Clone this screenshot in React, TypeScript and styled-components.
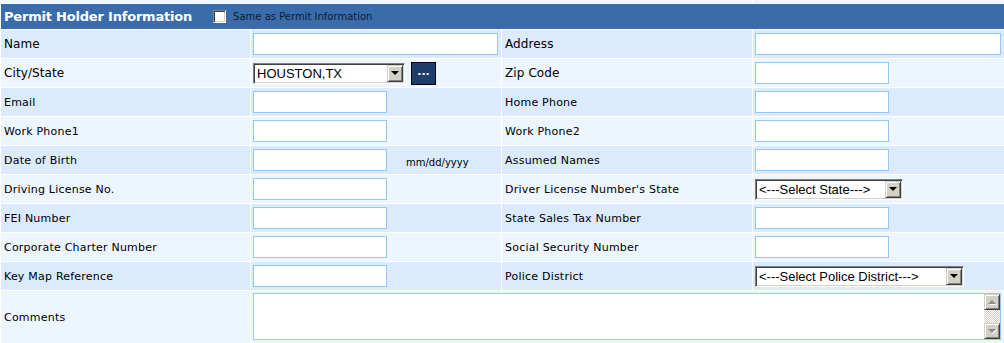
import React from 'react'
import styled, {createGlobalStyle} from 'styled-components'

const GlobalStyle = createGlobalStyle`
  body {
    margin: 0;
    background: #ffffff;
    font-family: "DejaVu Sans", Verdana, sans-serif;
  }
`

const Form = styled.div`
  width: 1004px;
  box-sizing: border-box;
  padding-left: 1px;
  display: grid;
  grid-template-columns: 249px 250px 250px 251px;
  grid-template-rows: 3px 25px repeat(9, 28px) 52px;
  gap: 1px;
  background: #ffffff;
`

const Cell = styled.div<{ $dark?: boolean, $span?: number }>`
  background: ${props => props.$dark ? '#dbeafc' : '#edf5fe'};
  grid-column: span ${props => props.$span || 1};
  display: flex;
  align-items: center;
  box-sizing: border-box;
  min-width: 0;
`

const LabelCell = styled(Cell)<{ $big?: boolean }>`
  padding-left: 3px;
  font-size: ${props => props.$big ? '12px' : '11px'};
  letter-spacing: ${props => props.$big ? '0.1px' : '0.22px'};
  color: #000000;
  white-space: nowrap;
`

const FieldCell = styled(Cell)`
  padding-left: 2px;
`

const Header = styled.div`
  grid-column: 1 / -1;
  background: #3a6cab;
  display: flex;
  align-items: center;
  padding-left: 3px;
`

const HeaderTitle = styled.span`
  font-size: 13px;
  font-weight: bold;
  letter-spacing: -0.2px;
  color: #ffffff;
  white-space: nowrap;
`

const CheckBox = styled.input`
  appearance: none;
  margin: 0 0 0 21px;
  width: 13px;
  height: 13px;
  box-sizing: border-box;
  background: #ffffff;
  border: 1px solid;
  border-color: #808080 #ffffff #ffffff #808080;
  box-shadow: inset 1px 1px #404040, inset -1px -1px #d4d0c8;
`

const CheckLabel = styled.span`
  margin-left: 7px;
  font-size: 10px;
  color: #0d1b33;
  white-space: nowrap;
`

const TextInput = styled.input<{ $w: number }>`
  width: ${props => props.$w}px;
  height: 22px;
  box-sizing: border-box;
  border: 1px solid #93c9fa;
  background: #ffffff;
  padding: 0 2px;
  margin: 0;
  outline: none;
`

const Select = styled.div<{ $w: number }>`
  width: ${props => props.$w}px;
  height: 21px;
  box-sizing: border-box;
  display: flex;
  align-items: stretch;
  background: #ffffff;
  border: 1px solid;
  border-color: #808080 #ffffff #ffffff #808080;
  box-shadow: inset 1px 1px #404040, inset -1px -1px #d4d0c8;
  padding: 1px;
`

const SelectText = styled.span`
  flex: 1;
  display: flex;
  align-items: center;
  padding-left: 2px;
  font-family: "Liberation Sans", Arial, sans-serif;
  font-size: 13px;
  color: #000000;
  white-space: nowrap;
  overflow: hidden;
`

const RaisedButton = styled.div<{ $h?: number }>`
  width: 16px;
  height: ${props => props.$h ? `${props.$h}px` : 'auto'};
  box-sizing: border-box;
  background: #d4d0c8;
  border: 1px solid;
  border-color: #d4d0c8 #404040 #404040 #d4d0c8;
  box-shadow: inset 1px 1px #ffffff, inset -1px -1px #808080;
  display: flex;
  align-items: center;
  justify-content: center;
  flex-shrink: 0;
`

const Triangle = styled.span<{ $up?: boolean, $grey?: boolean }>`
  width: 0;
  height: 0;
  border-left: 4px solid transparent;
  border-right: 4px solid transparent;
  ${props => props.$up
    ? `border-bottom: 4px solid ${props.$grey ? '#8a8a8a' : '#000'};`
    : `border-top: 4px solid ${props.$grey ? '#8a8a8a' : '#000'};`}
  filter: ${props => props.$grey ? 'drop-shadow(1px 1px 0 #ffffff)' : 'none'};
`

const DotsButton = styled.button`
  margin: 0 0 0 6px;
  width: 25px;
  height: 23px;
  padding: 0 0 4px;
  background: #1e3d6b;
  border: 1px solid #000000;
  color: #ffffff;
  font-family: "DejaVu Sans", Verdana, sans-serif;
  font-size: 11px;
  font-weight: bold;
  line-height: 1;
`

const Hint = styled.span`
  margin-left: 19px;
  padding-top: 6px;
  font-size: 10px;
  line-height: 12px;
  color: #000000;
`

const CommentBox = styled.div`
  width: 748px;
  height: 47px;
  box-sizing: border-box;
  border: 1px solid #93c9fa;
  background: #ffffff;
  display: flex;
  margin-bottom: 2px;
`

const CommentArea = styled.textarea`
  flex: 1;
  border: none;
  outline: none;
  resize: none;
  margin: 0;
  padding: 2px;
  background: #ffffff;
  overflow: hidden;
`

const ScrollBar = styled.div`
  width: 16px;
  display: flex;
  flex-direction: column;
  justify-content: space-between;
  background: repeating-conic-gradient(#d4d0c8 0 25%, #ffffff 0 50%) 0 0 / 2px 2px;
`

const dark = [true, false, true, false, true, false, true, false, true]

const rows = [
  {left: 'Email', right: 'Home Phone'},
  {left: 'Work Phone1', right: 'Work Phone2'},
  {left: 'Date of Birth', right: 'Assumed Names', hint: 'mm/dd/yyyy'},
  {left: 'Driving License No.', right: "Driver License Number's State", select: '<---Select State--->', selectW: 148},
  {left: 'FEI Number', right: 'State Sales Tax Number'},
  {left: 'Corporate Charter Number', right: 'Social Security Number'},
  {left: 'Key Map Reference', right: 'Police District', select: '<---Select Police District--->', selectW: 209},
]

const DropDown: React.FC<{ text: string, width: number }> = ({text, width}) => (
  <Select $w={width}>
    <SelectText>{text}</SelectText>
    <RaisedButton><Triangle/></RaisedButton>
  </Select>
)

const App: React.FC = () => {
  return (
    <>
      <GlobalStyle/>
      <Form>
        <Cell/>
        <Cell/>
        <Cell/>
        <Cell/>

        <Header>
          <HeaderTitle>Permit Holder Information</HeaderTitle>
          <CheckBox type="checkbox"/>
          <CheckLabel>Same as Permit Information</CheckLabel>
        </Header>

        <LabelCell $dark $big>Name</LabelCell>
        <FieldCell $dark><TextInput $w={245}/></FieldCell>
        <LabelCell $dark $big>Address</LabelCell>
        <FieldCell $dark><TextInput $w={246}/></FieldCell>

        <LabelCell $big>City/State</LabelCell>
        <FieldCell>
          <DropDown text="HOUSTON,TX" width={152}/>
          <DotsButton>...</DotsButton>
        </FieldCell>
        <LabelCell $big>Zip Code</LabelCell>
        <FieldCell><TextInput $w={134}/></FieldCell>

        {rows.map((row, i) => (
          <React.Fragment key={row.left}>
            <LabelCell $dark={dark[i + 2]}>{row.left}</LabelCell>
            <FieldCell $dark={dark[i + 2]}>
              <TextInput $w={134}/>
              {row.hint && <Hint>{row.hint}</Hint>}
            </FieldCell>
            <LabelCell $dark={dark[i + 2]}>{row.right}</LabelCell>
            <FieldCell $dark={dark[i + 2]}>
              {row.select
                ? <DropDown text={row.select} width={row.selectW!}/>
                : <TextInput $w={134}/>}
            </FieldCell>
          </React.Fragment>
        ))}

        <LabelCell>Comments</LabelCell>
        <FieldCell $span={3}>
          <CommentBox>
            <CommentArea/>
            <ScrollBar>
              <RaisedButton $h={16}><Triangle $up $grey/></RaisedButton>
              <RaisedButton $h={16}><Triangle $grey/></RaisedButton>
            </ScrollBar>
          </CommentBox>
        </FieldCell>
      </Form>
    </>
  )
}

export default App
